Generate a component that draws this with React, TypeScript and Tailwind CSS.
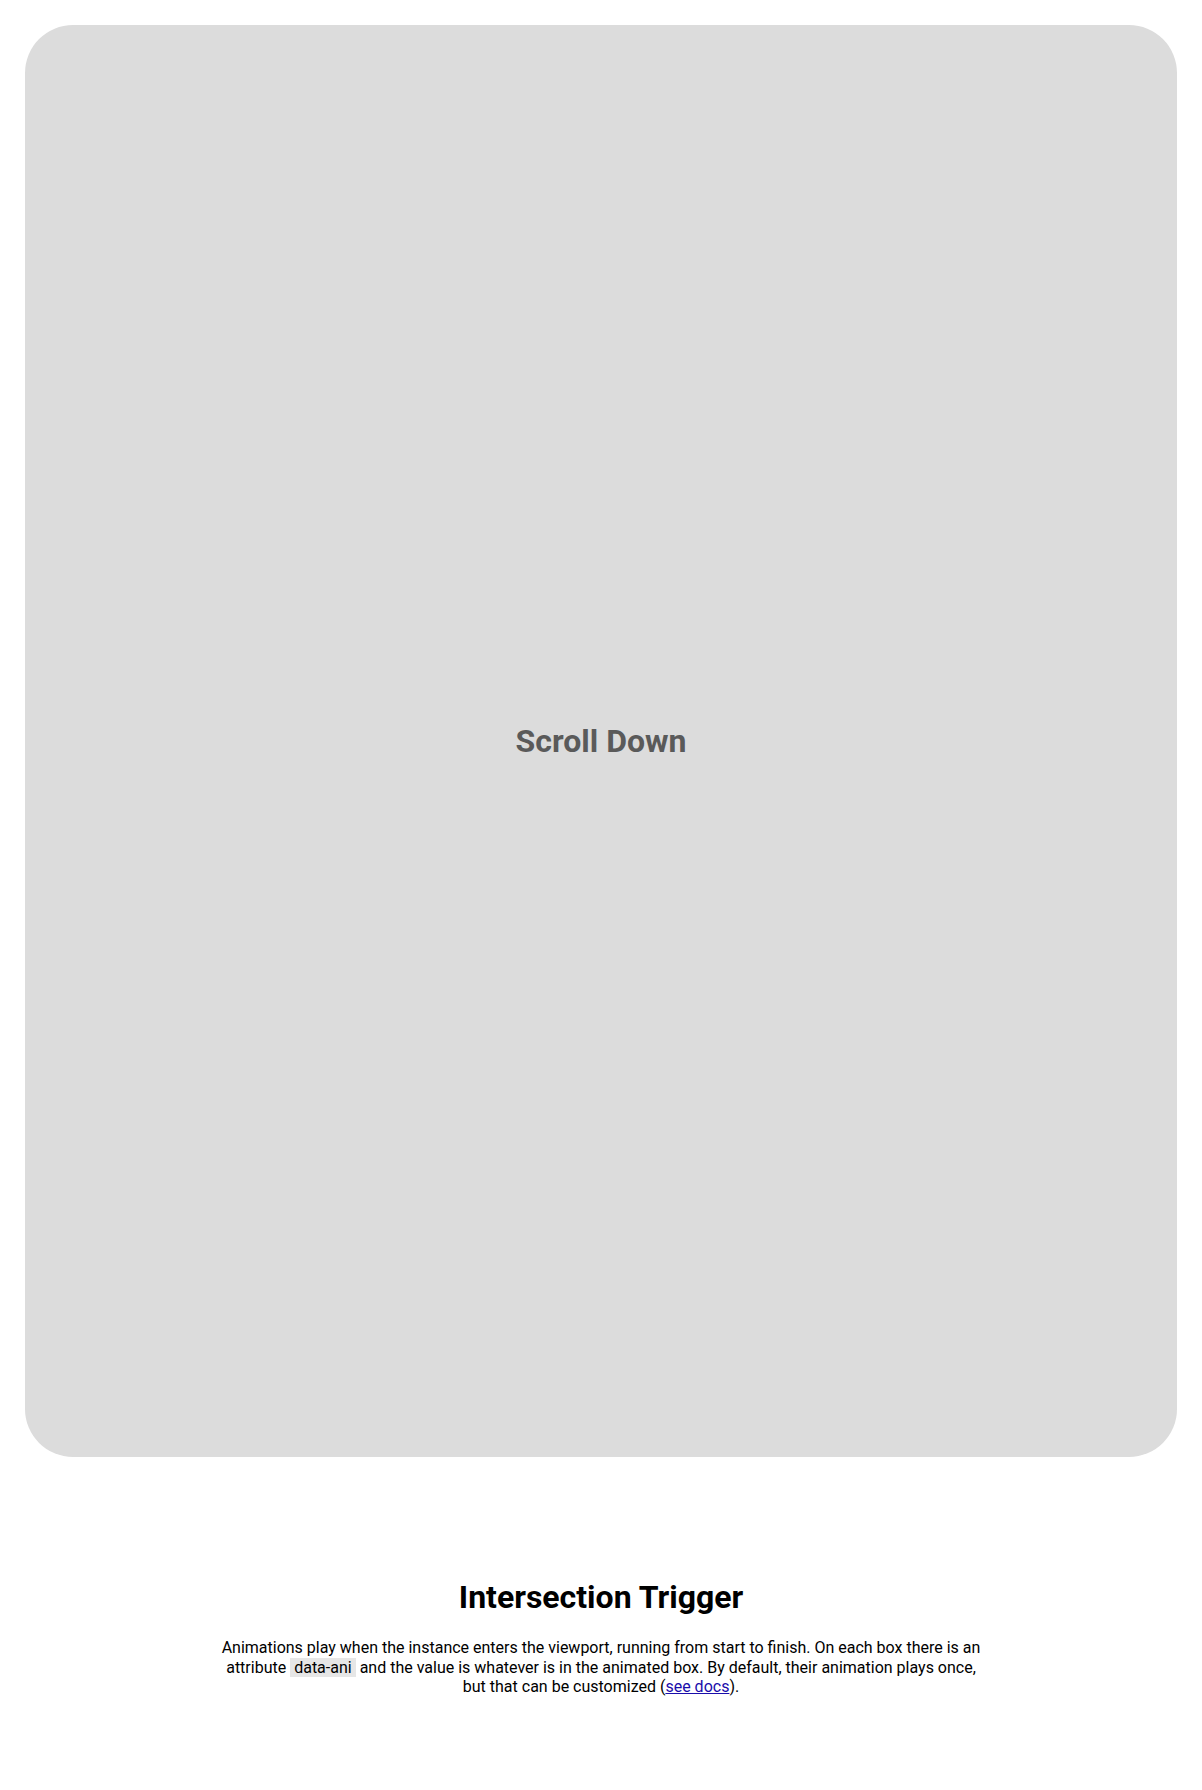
export default function App() {
  return (
    <div className="min-h-[1790px] bg-white p-[25px] font-['Roboto',sans-serif] text-black">
      {/* scroll spacer panel */}
      <div className="flex h-[80vh] items-center justify-center rounded-[48px] bg-[#dcdcdc]">
        <h2 className="text-[32px] font-bold leading-[1.2] text-[#5a5a5a]">Scroll Down</h2>
      </div>

      <section className="mt-[121px] flex flex-col items-center text-center">
        <h1 className="text-[32px] font-bold leading-[1.2]">Intersection Trigger</h1>
        <p className="mt-[22px] max-w-[760px] text-[16px] leading-[1.22]">
          Animations play when the instance enters the viewport, running from start to finish. On each box there
          is an attribute{' '}
          <code className="bg-[#e6e6e6] px-1 font-['Roboto',sans-serif]">data-ani</code> and the value is
          whatever is in the animated box. By default, their animation plays once, but that can be customized (
          <a href="#" className="text-[#1a0dab] underline">
            see docs
          </a>
          ).
        </p>
      </section>
    </div>
  );
}
